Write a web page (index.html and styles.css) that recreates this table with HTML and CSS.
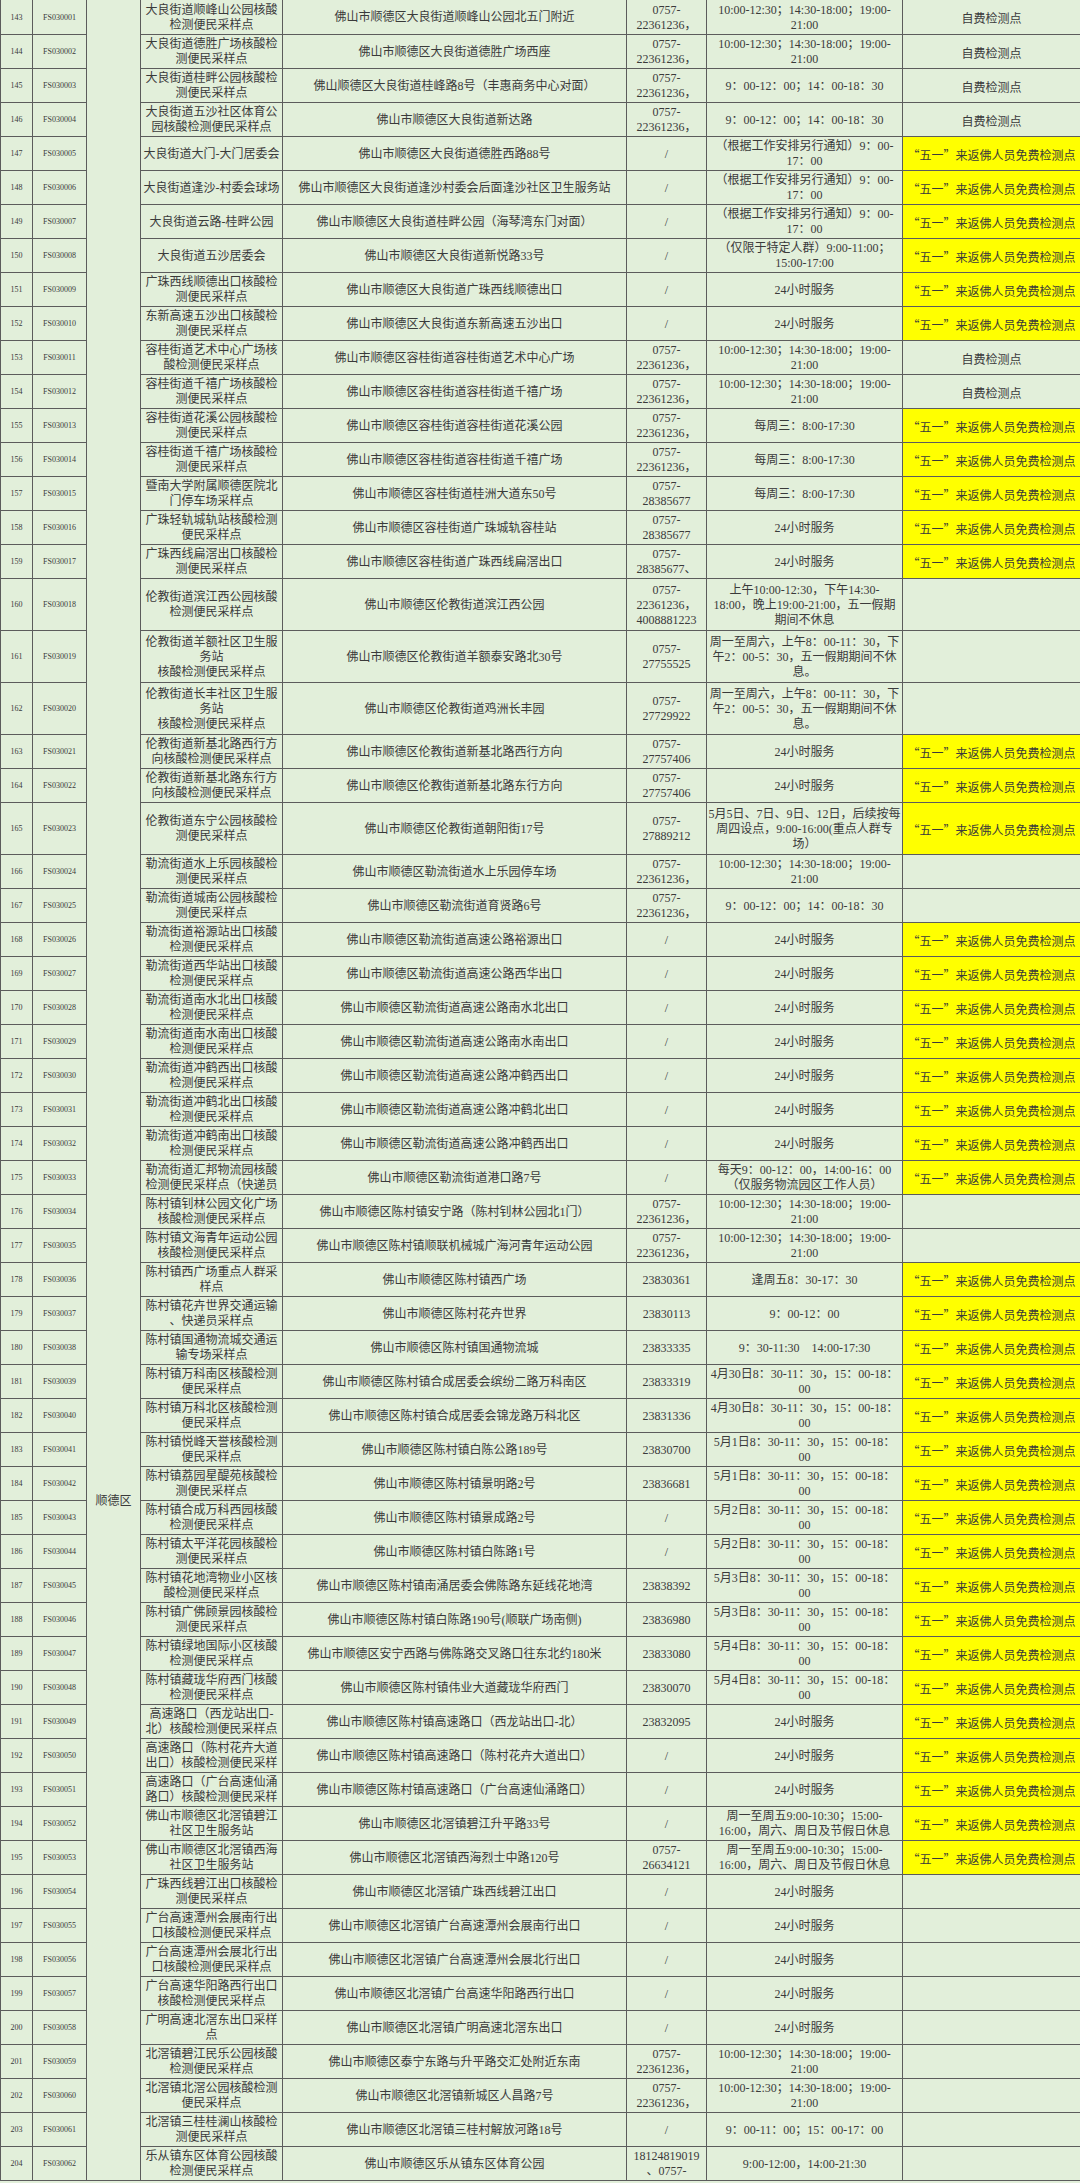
FILE: index.html
```html
<!DOCTYPE html>
<html lang="zh-CN">
<head>
<meta charset="utf-8">
<title>顺德区核酸检测点</title>
<link rel="stylesheet" href="styles.css">
</head>
<body>
<table class="sheet">
<colgroup>
<col class="w-idx"><col class="w-code"><col class="w-dist"><col class="w-name"><col class="w-addr"><col class="w-phone"><col class="w-hours"><col class="w-note">
</colgroup>
<tbody>
<tr><td class="idx">143</td><td class="code">FS030001</td><td class="dist" rowspan="62">顺德区</td><td>大良街道顺峰山公园核酸<br>检测便民采样点</td><td>佛山市顺德区大良街道顺峰山公园北五门附近</td><td>0757-<br>22361236，</td><td>10:00-12:30；14:30-18:00；19:00-<br>21:00</td><td class="note">自费检测点</td></tr>
<tr><td class="idx">144</td><td class="code">FS030002</td><td>大良街道德胜广场核酸检<br>测便民采样点</td><td>佛山市顺德区大良街道德胜广场西座</td><td>0757-<br>22361236，</td><td>10:00-12:30；14:30-18:00；19:00-<br>21:00</td><td class="note">自费检测点</td></tr>
<tr><td class="idx">145</td><td class="code">FS030003</td><td>大良街道桂畔公园核酸检<br>测便民采样点</td><td>佛山顺德区大良街道桂峰路8号（丰惠商务中心对面）</td><td>0757-<br>22361236，</td><td>9：00-12：00；14：00-18：30</td><td class="note">自费检测点</td></tr>
<tr><td class="idx">146</td><td class="code">FS030004</td><td>大良街道五沙社区体育公<br>园核酸检测便民采样点</td><td>佛山市顺德区大良街道新达路</td><td>0757-<br>22361236，</td><td>9：00-12：00；14：00-18：30</td><td class="note">自费检测点</td></tr>
<tr><td class="idx">147</td><td class="code">FS030005</td><td>大良街道大门-大门居委会</td><td>佛山市顺德区大良街道德胜西路88号</td><td>/</td><td>（根据工作安排另行通知）9：00-<br>17：00</td><td class="note y">“五一”来返佛人员免费检测点</td></tr>
<tr><td class="idx">148</td><td class="code">FS030006</td><td>大良街道逢沙-村委会球场</td><td>佛山市顺德区大良街道逢沙村委会后面逢沙社区卫生服务站</td><td>/</td><td>（根据工作安排另行通知）9：00-<br>17：00</td><td class="note y">“五一”来返佛人员免费检测点</td></tr>
<tr><td class="idx">149</td><td class="code">FS030007</td><td>大良街道云路-桂畔公园</td><td>佛山市顺德区大良街道桂畔公园（海琴湾东门对面）</td><td>/</td><td>（根据工作安排另行通知）9：00-<br>17：00</td><td class="note y">“五一”来返佛人员免费检测点</td></tr>
<tr><td class="idx">150</td><td class="code">FS030008</td><td>大良街道五沙居委会</td><td>佛山市顺德区大良街道新悦路33号</td><td>/</td><td>（仅限于特定人群）9:00-11:00；<br>15:00-17:00</td><td class="note y">“五一”来返佛人员免费检测点</td></tr>
<tr><td class="idx">151</td><td class="code">FS030009</td><td>广珠西线顺德出口核酸检<br>测便民采样点</td><td>佛山市顺德区大良街道广珠西线顺德出口</td><td>/</td><td>24小时服务</td><td class="note y">“五一”来返佛人员免费检测点</td></tr>
<tr><td class="idx">152</td><td class="code">FS030010</td><td>东新高速五沙出口核酸检<br>测便民采样点</td><td>佛山市顺德区大良街道东新高速五沙出口</td><td>/</td><td>24小时服务</td><td class="note y">“五一”来返佛人员免费检测点</td></tr>
<tr><td class="idx">153</td><td class="code">FS030011</td><td>容桂街道艺术中心广场核<br>酸检测便民采样点</td><td>佛山市顺德区容桂街道容桂街道艺术中心广场</td><td>0757-<br>22361236，</td><td>10:00-12:30；14:30-18:00；19:00-<br>21:00</td><td class="note">自费检测点</td></tr>
<tr><td class="idx">154</td><td class="code">FS030012</td><td>容桂街道千禧广场核酸检<br>测便民采样点</td><td>佛山市顺德区容桂街道容桂街道千禧广场</td><td>0757-<br>22361236，</td><td>10:00-12:30；14:30-18:00；19:00-<br>21:00</td><td class="note">自费检测点</td></tr>
<tr><td class="idx">155</td><td class="code">FS030013</td><td>容桂街道花溪公园核酸检<br>测便民采样点</td><td>佛山市顺德区容桂街道容桂街道花溪公园</td><td>0757-<br>22361236，</td><td>每周三：8:00-17:30</td><td class="note y">“五一”来返佛人员免费检测点</td></tr>
<tr><td class="idx">156</td><td class="code">FS030014</td><td>容桂街道千禧广场核酸检<br>测便民采样点</td><td>佛山市顺德区容桂街道容桂街道千禧广场</td><td>0757-<br>22361236，</td><td>每周三：8:00-17:30</td><td class="note y">“五一”来返佛人员免费检测点</td></tr>
<tr><td class="idx">157</td><td class="code">FS030015</td><td>暨南大学附属顺德医院北<br>门停车场采样点</td><td>佛山市顺德区容桂街道桂洲大道东50号</td><td>0757-<br>28385677</td><td>每周三：8:00-17:30</td><td class="note y">“五一”来返佛人员免费检测点</td></tr>
<tr><td class="idx">158</td><td class="code">FS030016</td><td>广珠轻轨城轨站核酸检测<br>便民采样点</td><td>佛山市顺德区容桂街道广珠城轨容桂站</td><td>0757-<br>28385677</td><td>24小时服务</td><td class="note y">“五一”来返佛人员免费检测点</td></tr>
<tr><td class="idx">159</td><td class="code">FS030017</td><td>广珠西线扁滘出口核酸检<br>测便民采样点</td><td>佛山市顺德区容桂街道广珠西线扁滘出口</td><td>0757-<br>28385677、</td><td>24小时服务</td><td class="note y">“五一”来返佛人员免费检测点</td></tr>
<tr class="tall"><td class="idx">160</td><td class="code">FS030018</td><td>伦教街道滨江西公园核酸<br>检测便民采样点</td><td>佛山市顺德区伦教街道滨江西公园</td><td>0757-<br>22361236，<br>4008881223</td><td>上午10:00-12:30，下午14:30-<br>18:00，晚上19:00-21:00，五一假期<br>期间不休息</td><td class="note"></td></tr>
<tr class="tall"><td class="idx">161</td><td class="code">FS030019</td><td>伦教街道羊额社区卫生服<br>务站<br>核酸检测便民采样点</td><td>佛山市顺德区伦教街道羊额泰安路北30号</td><td>0757-<br>27755525</td><td>周一至周六，上午8：00-11：30，下<br>午2：00-5：30，五一假期期间不休<br>息。</td><td class="note"></td></tr>
<tr class="tall"><td class="idx">162</td><td class="code">FS030020</td><td>伦教街道长丰社区卫生服<br>务站<br>核酸检测便民采样点</td><td>佛山市顺德区伦教街道鸡洲长丰园</td><td>0757-<br>27729922</td><td>周一至周六，上午8：00-11：30，下<br>午2：00-5：30，五一假期期间不休<br>息。</td><td class="note"></td></tr>
<tr><td class="idx">163</td><td class="code">FS030021</td><td>伦教街道新基北路西行方<br>向核酸检测便民采样点</td><td>佛山市顺德区伦教街道新基北路西行方向</td><td>0757-<br>27757406</td><td>24小时服务</td><td class="note y">“五一”来返佛人员免费检测点</td></tr>
<tr><td class="idx">164</td><td class="code">FS030022</td><td>伦教街道新基北路东行方<br>向核酸检测便民采样点</td><td>佛山市顺德区伦教街道新基北路东行方向</td><td>0757-<br>27757406</td><td>24小时服务</td><td class="note y">“五一”来返佛人员免费检测点</td></tr>
<tr class="tall"><td class="idx">165</td><td class="code">FS030023</td><td>伦教街道东宁公园核酸检<br>测便民采样点</td><td>佛山市顺德区伦教街道朝阳街17号</td><td>0757-<br>27889212</td><td>5月5日、7日、9日、12日，后续按每<br>周四设点，9:00-16:00(重点人群专<br>场）</td><td class="note y">“五一”来返佛人员免费检测点</td></tr>
<tr><td class="idx">166</td><td class="code">FS030024</td><td>勒流街道水上乐园核酸检<br>测便民采样点</td><td>佛山市顺德区勒流街道水上乐园停车场</td><td>0757-<br>22361236，</td><td>10:00-12:30；14:30-18:00；19:00-<br>21:00</td><td class="note"></td></tr>
<tr><td class="idx">167</td><td class="code">FS030025</td><td>勒流街道城南公园核酸检<br>测便民采样点</td><td>佛山市顺德区勒流街道育贤路6号</td><td>0757-<br>22361236，</td><td>9：00-12：00；14：00-18：30</td><td class="note"></td></tr>
<tr><td class="idx">168</td><td class="code">FS030026</td><td>勒流街道裕源站出口核酸<br>检测便民采样点</td><td>佛山市顺德区勒流街道高速公路裕源出口</td><td>/</td><td>24小时服务</td><td class="note y">“五一”来返佛人员免费检测点</td></tr>
<tr><td class="idx">169</td><td class="code">FS030027</td><td>勒流街道西华站出口核酸<br>检测便民采样点</td><td>佛山市顺德区勒流街道高速公路西华出口</td><td>/</td><td>24小时服务</td><td class="note y">“五一”来返佛人员免费检测点</td></tr>
<tr><td class="idx">170</td><td class="code">FS030028</td><td>勒流街道南水北出口核酸<br>检测便民采样点</td><td>佛山市顺德区勒流街道高速公路南水北出口</td><td>/</td><td>24小时服务</td><td class="note y">“五一”来返佛人员免费检测点</td></tr>
<tr><td class="idx">171</td><td class="code">FS030029</td><td>勒流街道南水南出口核酸<br>检测便民采样点</td><td>佛山市顺德区勒流街道高速公路南水南出口</td><td>/</td><td>24小时服务</td><td class="note y">“五一”来返佛人员免费检测点</td></tr>
<tr><td class="idx">172</td><td class="code">FS030030</td><td>勒流街道冲鹤西出口核酸<br>检测便民采样点</td><td>佛山市顺德区勒流街道高速公路冲鹤西出口</td><td>/</td><td>24小时服务</td><td class="note y">“五一”来返佛人员免费检测点</td></tr>
<tr><td class="idx">173</td><td class="code">FS030031</td><td>勒流街道冲鹤北出口核酸<br>检测便民采样点</td><td>佛山市顺德区勒流街道高速公路冲鹤北出口</td><td>/</td><td>24小时服务</td><td class="note y">“五一”来返佛人员免费检测点</td></tr>
<tr><td class="idx">174</td><td class="code">FS030032</td><td>勒流街道冲鹤南出口核酸<br>检测便民采样点</td><td>佛山市顺德区勒流街道高速公路冲鹤西出口</td><td>/</td><td>24小时服务</td><td class="note y">“五一”来返佛人员免费检测点</td></tr>
<tr><td class="idx">175</td><td class="code">FS030033</td><td class="clip">勒流街道汇邦物流园核酸<br>检测便民采样点（快递员</td><td>佛山市顺德区勒流街道港口路7号</td><td>/</td><td>每天9：00-12：00，14:00-16：00<br>（仅服务物流园区工作人员）</td><td class="note y">“五一”来返佛人员免费检测点</td></tr>
<tr><td class="idx">176</td><td class="code">FS030034</td><td>陈村镇钊林公园文化广场<br>核酸检测便民采样点</td><td>佛山市顺德区陈村镇安宁路（陈村钊林公园北1门）</td><td>0757-<br>22361236，</td><td>10:00-12:30；14:30-18:00；19:00-<br>21:00</td><td class="note"></td></tr>
<tr><td class="idx">177</td><td class="code">FS030035</td><td>陈村镇文海青年运动公园<br>核酸检测便民采样点</td><td>佛山市顺德区陈村镇顺联机械城广海河青年运动公园</td><td>0757-<br>22361236，</td><td>10:00-12:30；14:30-18:00；19:00-<br>21:00</td><td class="note"></td></tr>
<tr><td class="idx">178</td><td class="code">FS030036</td><td>陈村镇西广场重点人群采<br>样点</td><td>佛山市顺德区陈村镇西广场</td><td>23830361</td><td>逢周五8：30-17：30</td><td class="note y">“五一”来返佛人员免费检测点</td></tr>
<tr><td class="idx">179</td><td class="code">FS030037</td><td>陈村镇花卉世界交通运输<br>、快递员采样点</td><td>佛山市顺德区陈村花卉世界</td><td>23830113</td><td>9：00-12：00</td><td class="note y">“五一”来返佛人员免费检测点</td></tr>
<tr><td class="idx">180</td><td class="code">FS030038</td><td>陈村镇国通物流城交通运<br>输专场采样点</td><td>佛山市顺德区陈村镇国通物流城</td><td>23833335</td><td>9：30-11:30　14:00-17:30</td><td class="note y">“五一”来返佛人员免费检测点</td></tr>
<tr><td class="idx">181</td><td class="code">FS030039</td><td>陈村镇万科南区核酸检测<br>便民采样点</td><td>佛山市顺德区陈村镇合成居委会缤纷二路万科南区</td><td>23833319</td><td>4月30日8：30-11：30，15：00-18：<br>00</td><td class="note y">“五一”来返佛人员免费检测点</td></tr>
<tr><td class="idx">182</td><td class="code">FS030040</td><td>陈村镇万科北区核酸检测<br>便民采样点</td><td>佛山市顺德区陈村镇合成居委会锦龙路万科北区</td><td>23831336</td><td>4月30日8：30-11：30，15：00-18：<br>00</td><td class="note y">“五一”来返佛人员免费检测点</td></tr>
<tr><td class="idx">183</td><td class="code">FS030041</td><td>陈村镇悦峰天誉核酸检测<br>便民采样点</td><td>佛山市顺德区陈村镇白陈公路189号</td><td>23830700</td><td>5月1日8：30-11：30，15：00-18：<br>00</td><td class="note y">“五一”来返佛人员免费检测点</td></tr>
<tr><td class="idx">184</td><td class="code">FS030042</td><td>陈村镇荔园星醍苑核酸检<br>测便民采样点</td><td>佛山市顺德区陈村镇景明路2号</td><td>23836681</td><td>5月1日8：30-11：30，15：00-18：<br>00</td><td class="note y">“五一”来返佛人员免费检测点</td></tr>
<tr><td class="idx">185</td><td class="code">FS030043</td><td>陈村镇合成万科西园核酸<br>检测便民采样点</td><td>佛山市顺德区陈村镇景成路2号</td><td>/</td><td>5月2日8：30-11：30，15：00-18：<br>00</td><td class="note y">“五一”来返佛人员免费检测点</td></tr>
<tr><td class="idx">186</td><td class="code">FS030044</td><td>陈村镇太平洋花园核酸检<br>测便民采样点</td><td>佛山市顺德区陈村镇白陈路1号</td><td>/</td><td>5月2日8：30-11：30，15：00-18：<br>00</td><td class="note y">“五一”来返佛人员免费检测点</td></tr>
<tr><td class="idx">187</td><td class="code">FS030045</td><td>陈村镇花地湾物业小区核<br>酸检测便民采样点</td><td>佛山市顺德区陈村镇南涌居委会佛陈路东延线花地湾</td><td>23838392</td><td>5月3日8：30-11：30，15：00-18：<br>00</td><td class="note y">“五一”来返佛人员免费检测点</td></tr>
<tr><td class="idx">188</td><td class="code">FS030046</td><td>陈村镇广佛顾景园核酸检<br>测便民采样点</td><td>佛山市顺德区陈村镇白陈路190号(顺联广场南侧)</td><td>23836980</td><td>5月3日8：30-11：30，15：00-18：<br>00</td><td class="note y">“五一”来返佛人员免费检测点</td></tr>
<tr><td class="idx">189</td><td class="code">FS030047</td><td>陈村镇绿地国际小区核酸<br>检测便民采样点</td><td>佛山市顺德区安宁西路与佛陈路交叉路口往东北约180米</td><td>23833080</td><td>5月4日8：30-11：30，15：00-18：<br>00</td><td class="note y">“五一”来返佛人员免费检测点</td></tr>
<tr><td class="idx">190</td><td class="code">FS030048</td><td>陈村镇藏珑华府西门核酸<br>检测便民采样点</td><td>佛山市顺德区陈村镇伟业大道藏珑华府西门</td><td>23830070</td><td>5月4日8：30-11：30，15：00-18：<br>00</td><td class="note y">“五一”来返佛人员免费检测点</td></tr>
<tr><td class="idx">191</td><td class="code">FS030049</td><td>高速路口（西龙站出口-<br>北）核酸检测便民采样点</td><td>佛山市顺德区陈村镇高速路口（西龙站出口-北）</td><td>23832095</td><td>24小时服务</td><td class="note y">“五一”来返佛人员免费检测点</td></tr>
<tr><td class="idx">192</td><td class="code">FS030050</td><td class="clip">高速路口（陈村花卉大道<br>出口）核酸检测便民采样</td><td>佛山市顺德区陈村镇高速路口（陈村花卉大道出口）</td><td>/</td><td>24小时服务</td><td class="note y">“五一”来返佛人员免费检测点</td></tr>
<tr><td class="idx">193</td><td class="code">FS030051</td><td class="clip">高速路口（广台高速仙涌<br>路口）核酸检测便民采样</td><td>佛山市顺德区陈村镇高速路口（广台高速仙涌路口）</td><td>/</td><td>24小时服务</td><td class="note y">“五一”来返佛人员免费检测点</td></tr>
<tr><td class="idx">194</td><td class="code">FS030052</td><td>佛山市顺德区北滘镇碧江<br>社区卫生服务站</td><td>佛山市顺德区北滘镇碧江升平路33号</td><td>/</td><td>周一至周五9:00-10:30；15:00-<br>16:00，周六、周日及节假日休息</td><td class="note y">“五一”来返佛人员免费检测点</td></tr>
<tr><td class="idx">195</td><td class="code">FS030053</td><td>佛山市顺德区北滘镇西海<br>社区卫生服务站</td><td>佛山市顺德区北滘镇西海烈士中路120号</td><td>0757-<br>26634121</td><td>周一至周五9:00-10:30；15:00-<br>16:00，周六、周日及节假日休息</td><td class="note y">“五一”来返佛人员免费检测点</td></tr>
<tr><td class="idx">196</td><td class="code">FS030054</td><td>广珠西线碧江出口核酸检<br>测便民采样点</td><td>佛山市顺德区北滘镇广珠西线碧江出口</td><td>/</td><td>24小时服务</td><td class="note"></td></tr>
<tr><td class="idx">197</td><td class="code">FS030055</td><td>广台高速潭州会展南行出<br>口核酸检测便民采样点</td><td>佛山市顺德区北滘镇广台高速潭州会展南行出口</td><td>/</td><td>24小时服务</td><td class="note"></td></tr>
<tr><td class="idx">198</td><td class="code">FS030056</td><td>广台高速潭州会展北行出<br>口核酸检测便民采样点</td><td>佛山市顺德区北滘镇广台高速潭州会展北行出口</td><td>/</td><td>24小时服务</td><td class="note"></td></tr>
<tr><td class="idx">199</td><td class="code">FS030057</td><td>广台高速华阳路西行出口<br>核酸检测便民采样点</td><td>佛山市顺德区北滘镇广台高速华阳路西行出口</td><td>/</td><td>24小时服务</td><td class="note"></td></tr>
<tr><td class="idx">200</td><td class="code">FS030058</td><td>广明高速北滘东出口采样<br>点</td><td>佛山市顺德区北滘镇广明高速北滘东出口</td><td>/</td><td>24小时服务</td><td class="note"></td></tr>
<tr><td class="idx">201</td><td class="code">FS030059</td><td>北滘镇碧江民乐公园核酸<br>检测便民采样点</td><td>佛山市顺德区泰宁东路与升平路交汇处附近东南</td><td>0757-<br>22361236，</td><td>10:00-12:30；14:30-18:00；19:00-<br>21:00</td><td class="note"></td></tr>
<tr><td class="idx">202</td><td class="code">FS030060</td><td>北滘镇北滘公园核酸检测<br>便民采样点</td><td>佛山市顺德区北滘镇新城区人昌路7号</td><td>0757-<br>22361236，</td><td>10:00-12:30；14:30-18:00；19:00-<br>21:00</td><td class="note"></td></tr>
<tr><td class="idx">203</td><td class="code">FS030061</td><td>北滘镇三桂桂澜山核酸检<br>测便民采样点</td><td>佛山市顺德区北滘镇三桂村解放河路18号</td><td>/</td><td>9：00-11：00；15：00-17：00</td><td class="note"></td></tr>
<tr><td class="idx">204</td><td class="code">FS030062</td><td>乐从镇东区体育公园核酸<br>检测便民采样点</td><td>佛山市顺德区乐从镇东区体育公园</td><td class="clip">18124819019<br>、0757-</td><td>9:00-12:00，14:00-21:30</td><td class="note"></td></tr>
</tbody>
</table>
</body>
</html>
```

FILE: styles.css
```css
* { box-sizing: border-box; }

html, body {
  margin: 0;
  padding: 0;
  background: #e2efda;
}

body {
  width: 1080px;
  height: 2183px;
  overflow: hidden;
}

.sheet {
  border-collapse: collapse;
  table-layout: fixed;
  width: 1080px;
  font-family: "Liberation Serif", "Noto Sans CJK SC", serif;
  font-size: 12px;
  line-height: 15px;
  color: #3a3a3a;
  background: #e2efda;
}

.w-idx { width: 32px; }
.w-code { width: 54px; }
.w-dist { width: 54px; }
.w-name { width: 142px; }
.w-addr { width: 344px; }
.w-phone { width: 80px; }
.w-hours { width: 196px; }
.w-note { width: 178px; }

.sheet tr { height: 34px; }
.sheet tr.tall { height: 52px; }

.sheet td {
  border: 1px solid #5c5c5c;
  padding: 2px 0 0;
  text-align: center;
  vertical-align: middle;
  white-space: nowrap;
  overflow: hidden;
}

.sheet tr:first-child td { border-top-style: hidden; }

.sheet td.idx,
.sheet td.code { font-size: 8px; line-height: 10px; }

.sheet td.dist {
  vertical-align: top;
  padding-top: 1494px;
}

.sheet td.note { font-family: "Noto Sans CJK SC", sans-serif; }
.sheet td.y { background: #ffff00; }

.sheet td.clip { vertical-align: top; }
```
